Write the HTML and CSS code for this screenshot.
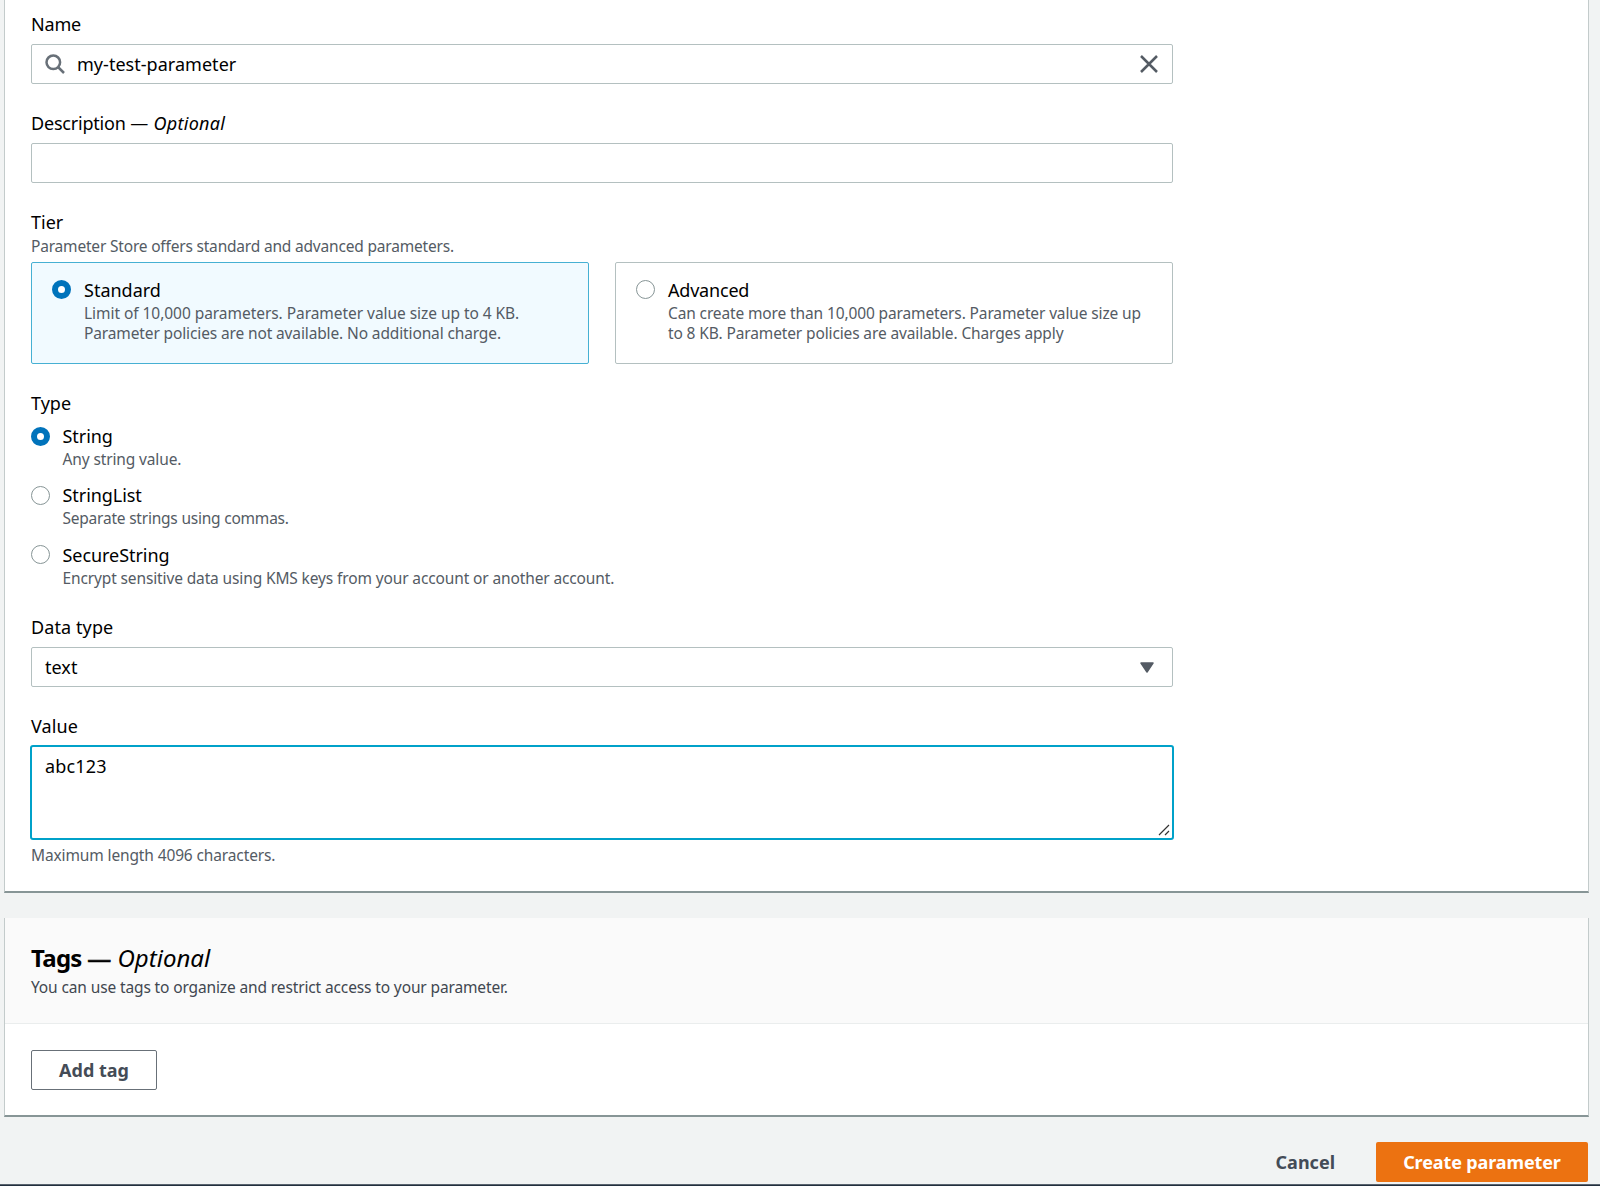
FILE: index.html
```html
<!DOCTYPE html>
<html lang="en">
<head>
<meta charset="utf-8">
<title>Create parameter</title>
<link rel="stylesheet" href="styles.css">
</head>
<body>
<main class="page">
  <section class="card details">
    <div class="field">
      <div class="label tight">Name</div>
      <div class="control">
        <svg class="search" viewBox="0 0 20 20" width="20" height="20"><circle cx="8.3" cy="8.3" r="6.8"/><path d="M13 13l6 6"/></svg>
        <span class="value">my-test-parameter</span>
        <svg class="close" viewBox="0 0 18 18" width="18" height="18"><path d="M1 1l16 16M17 1L1 17"/></svg>
      </div>
    </div>
    <div class="field">
      <div class="label tight">Description <span class="optional">— <i>Optional</i></span></div>
      <div class="control"></div>
    </div>
    <div class="field">
      <div class="label">Tier</div>
      <div class="hint tier-hint">Parameter Store offers standard and advanced parameters.</div>
      <div class="tiles">
        <div class="tile selected">
          <span class="radio checked"></span>
          <div>
            <div class="option">Standard</div>
            <div class="hint"><span class="wide">Limit of 10,000 parameters. Parameter value size up to 4 KB.</span><br>Parameter policies are not available. No additional charge.</div>
          </div>
        </div>
        <div class="tile">
          <span class="radio"></span>
          <div>
            <div class="option tight">Advanced</div>
            <div class="hint">Can create more than 10,000 parameters. Parameter value size up<br>to 8 KB. Parameter policies are available. Charges apply</div>
          </div>
        </div>
      </div>
    </div>
    <div class="field">
      <div class="label">Type</div>
      <div class="radios">
        <div class="choice">
          <span class="radio checked"></span>
          <div><div class="option tight">String</div><div class="hint">Any string value.</div></div>
        </div>
        <div class="choice">
          <span class="radio"></span>
          <div><div class="option">StringList</div><div class="hint narrow">Separate strings using commas.</div></div>
        </div>
        <div class="choice">
          <span class="radio"></span>
          <div><div class="option">SecureString</div><div class="hint">Encrypt sensitive data using KMS keys from your account or another account.</div></div>
        </div>
      </div>
    </div>
    <div class="field">
      <div class="label loose">Data type</div>
      <div class="control">
        <span class="value">text</span>
        <svg class="caret" viewBox="0 0 14 11" width="14" height="11"><path d="M1 1h12L7 10z"/></svg>
      </div>
    </div>
    <div class="field">
      <div class="label loose">Value</div>
      <div class="control area">
        <span class="value">abc123</span>
        <svg class="grip" viewBox="0 0 12 12" width="12" height="12"><path d="M1 11L11 1M7 11l4-4"/></svg>
      </div>
      <div class="hint max-hint">Maximum length 4096 characters.</div>
    </div>
  </section>
  <section class="card tags">
    <header class="tags-head">
      <h2 class="title">Tags <span class="optional"><span class="dash">—</span> <i>Optional</i></span></h2>
      <p class="hint dark">You can use tags to organize and restrict access to your parameter.</p>
    </header>
    <div class="tags-body"><button class="btn outline">Add tag</button></div>
  </section>
  <footer class="actions">
    <button class="btn link">Cancel</button>
    <button class="btn primary">Create parameter</button>
  </footer>
</main>
<div class="bottom-bar"></div>
</body>
</html>
```
FILE: styles.css
```css
* { box-sizing: border-box; }
body {
  margin: 0;
  height: 1186px;
  overflow: hidden;
  display: flex;
  flex-direction: column;
  background: #f1f3f3;
  font-family: "Noto Sans", "Open Sans", sans-serif;
  font-size: 18px;
  color: #000;
}
.page { flex: 1; padding: 0 11px 0 4px; min-height: 0; }
.card {
  background: #fff;
  border: 1px solid #c3cbcb;
  border-top: 0;
  border-bottom: 2px solid #879596;
}
.details { height: 893px; padding: 9px 0 0 26px; }
.field { width: 1142px; margin-bottom: 24px; }
.label { height: 30px; line-height: 31px; margin-bottom: 5px; }
.tight { letter-spacing: -0.2px; }
.loose { letter-spacing: 0.1px; }
.label .optional { letter-spacing: 0.3px; }
.control {
  display: flex;
  align-items: center;
  height: 40px;
  padding: 0 14px 0 13px;
  border: 1px solid #b4c0c0;
  border-radius: 2px;
  letter-spacing: 0.03px;
}
svg { flex: none; fill: none; stroke: #545b64; stroke-width: 2.5; }
.search { margin-right: 12px; stroke: #687078; }
.value { flex: 1; }
.caret { margin-right: 4px; fill: #545b64; stroke-width: 1.5; stroke-linejoin: round; }
.hint { margin: 0; font-size: 15.5px; line-height: 20px; color: #545b64; letter-spacing: -0.13px; }
.wide { letter-spacing: -0.05px; }
.narrow { letter-spacing: -0.22px; }
.tier-hint { margin: -6px 0 6px; letter-spacing: -0.19px; }
.tiles { display: flex; gap: 26px; }
.tile {
  display: flex;
  flex: 1;
  gap: 13px;
  height: 102px;
  padding: 12px 20px;
  border: 1px solid #b4c0c0;
  border-radius: 2px;
}
.tile.selected { background: #f1faff; border-color: #46b0d3; }
.radio {
  flex: none;
  width: 19px;
  height: 19px;
  margin-top: 5px;
  border: 1px solid #879596;
  border-radius: 50%;
  background: #fff;
}
.radio.checked { border: 6px solid #0073bb; }
.option { height: 28px; line-height: 30px; }
.choice .option { letter-spacing: -0.06px; }
.radios { display: flex; flex-direction: column; height: 167px; margin-top: -2px; }
.choice { display: flex; flex: none; gap: 12.5px; height: 59.4px; }
.choice .radio { margin-top: 5.5px; }
.area {
  height: 95px;
  width: 1144px;
  margin: -1px 0 0 -1px;
  align-items: flex-start;
  padding: 4px 2px 2px 13px;
  border: 2px solid #00a1c9;
  border-radius: 3px;
  line-height: 30px;
  letter-spacing: 0.15px;
}
.grip { align-self: flex-end; stroke: #333; stroke-width: 1.2; }
.max-hint { margin-top: 5px; }
.tags { height: 199px; margin-top: 25px; }
.tags-head { height: 106px; padding: 24px 26px; background: #fafafa; border-bottom: 1px solid #eaeded; }
.title { margin: 0; font-size: 24px; line-height: 32px; font-weight: 700; letter-spacing: -0.7px; }
.title .optional { font-weight: 400; letter-spacing: 0; }
.dash { -webkit-text-stroke: 0.6px #000; }
.dark { margin-top: 3px; color: #414750; }
.tags-body { padding: 26px; }
.btn {
  height: 40px;
  padding: 0 0 1px;
  font: 700 18px "Noto Sans", sans-serif;
  color: #444c57;
  background: none;
  border: 0;
  border-radius: 2px;
}
.outline { width: 126px; border: 1px solid #687078; background: #fff; }
.actions { display: flex; justify-content: flex-end; gap: 41px; padding: 25px 1px 0 0; }
.primary { width: 212px; background: #ec7211; color: #fff; letter-spacing: -0.12px; }
.bottom-bar { height: 2px; background: #232f3e; border-top: 1px solid #59636e; }
```
